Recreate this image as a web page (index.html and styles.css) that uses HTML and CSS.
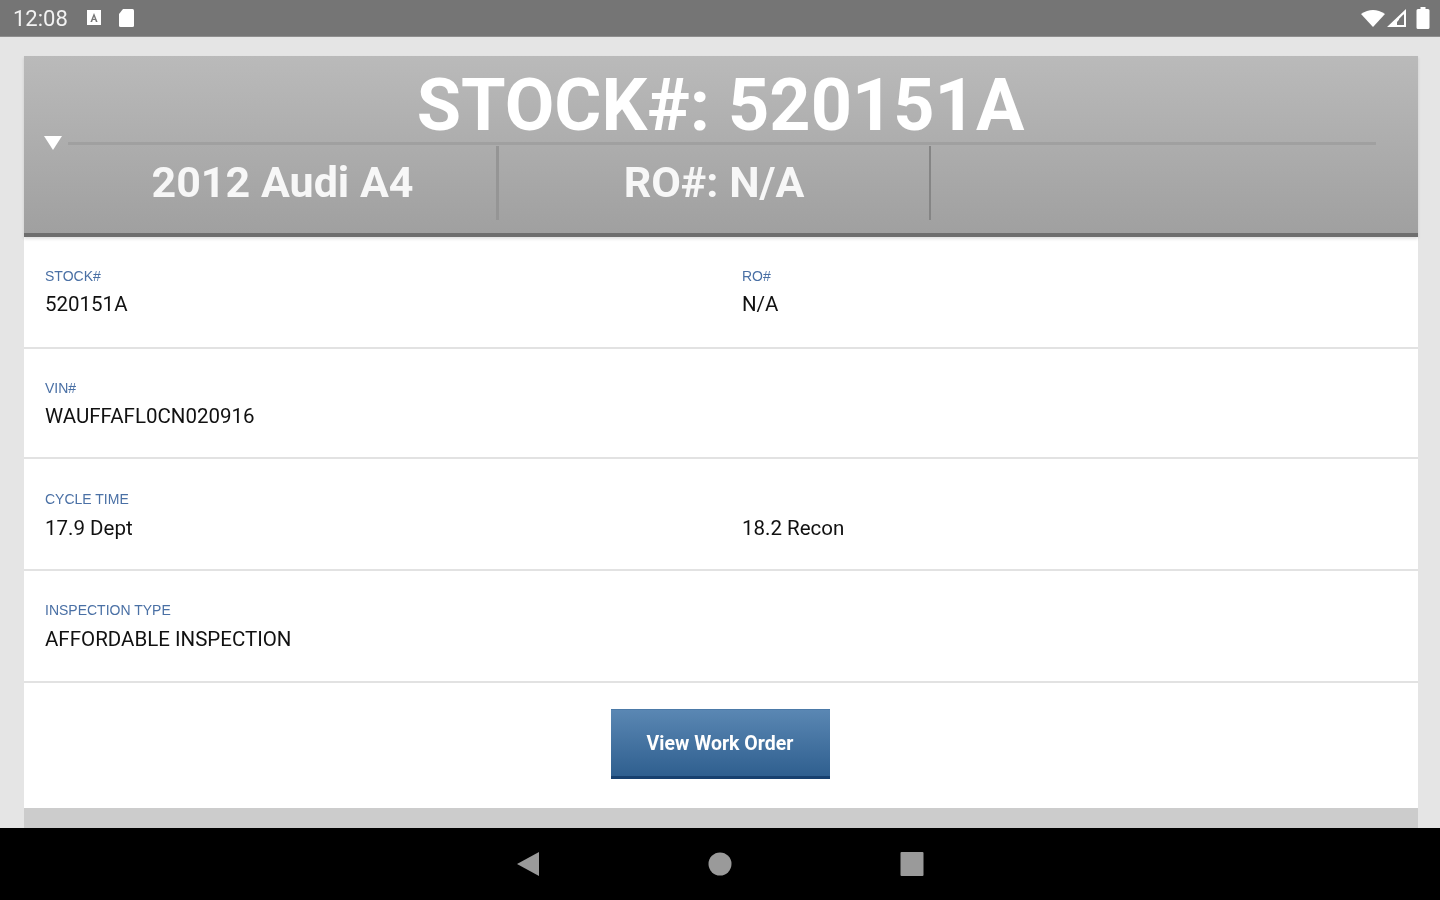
FILE: index.html
```html
<!DOCTYPE html>
<html lang="en">
<head>
  <meta charset="UTF-8">
  <meta name="viewport" content="width=device-width, initial-scale=1.0">
  <title>Vehicle Detail</title>
  <link rel="stylesheet" href="styles.css">
</head>
<body>
  <div class="status-bar">
    <span class="clock">12:08</span>
    <svg class="status-icon" width="18" height="18" viewBox="0 0 18 18">
      <path fill="#fff" fill-rule="evenodd" d="M2 1h14v15H2zM9 4l-3.6 9h1.7l.7-2h2.4l.7 2h1.7L9 4zm0 3.6L9.8 10H8.2z"/>
    </svg>
    <svg class="status-icon" width="20" height="20" viewBox="0 0 20 20">
      <path fill="#fff" d="M7 1h9.5A1.5 1.5 0 0 1 18 2.5v15a1.5 1.5 0 0 1-1.500 1.500h-12A1.500 1.500 0 0 1 3 17.500V6z"/>
    </svg>
    <div class="status-right">
      <svg width="24" height="18" viewBox="0 0 24 18"><path fill="#fff" d="M0 5Q12-3 24 5L12 18z"/></svg>
      <svg class="signal" width="20" height="18" viewBox="0 0 20 18">
        <path fill="#fff" fill-rule="evenodd" d="M19 0v18H0zM17 5l-7 8v3h7z" />
        <path fill="#777" d="M16 6v10h-4v-6z"/>
      </svg>
      <svg width="14" height="22" viewBox="0 0 14 22"><path fill="#fff" d="M4.500 0h5v2H12a1.500 1.500 0 0 1 1.500 1.500V20.500A1.500 1.500 0 0 1 12 22H2A1.500 1.500 0 0 1 .5 20.500V3.500A1.500 1.500 0 0 1 2 2h2.500z"/></svg>
    </div>
  </div>

  <div class="page">
    <div class="card">
      <div class="header">
        <h1 class="stock-title">STOCK#: 520151A</h1>
        <div class="rule-row">
          <span class="arrow"></span>
          <span class="rule"></span>
        </div>
        <div class="summary">
          <div class="summary-cell cell-car">2012 Audi A4</div>
          <div class="summary-cell cell-ro">RO#: N/A</div>
          <div class="summary-cell"></div>
        </div>
      </div>

      <div class="row row-a">
        <div class="col">
          <div class="label">STOCK#</div>
          <div class="value">520151A</div>
        </div>
        <div class="col">
          <div class="label">RO#</div>
          <div class="value">N/A</div>
        </div>
      </div>
      <div class="row row-b">
        <div class="col">
          <div class="label">VIN#</div>
          <div class="value">WAUFFAFL0CN020916</div>
        </div>
      </div>
      <div class="row row-c">
        <div class="col">
          <div class="label">CYCLE TIME</div>
          <div class="value">17.9 Dept</div>
        </div>
        <div class="col">
          <div class="label">&nbsp;</div>
          <div class="value">18.2 Recon</div>
        </div>
      </div>
      <div class="row row-d">
        <div class="col">
          <div class="label">INSPECTION TYPE</div>
          <div class="value">AFFORDABLE INSPECTION</div>
        </div>
      </div>

      <div class="actions">
        <a class="btn" href="javascript:;">View Work Order</a>
      </div>
    </div>
  </div>

  <div class="nav-bar">
    <svg width="24" height="26" viewBox="0 0 24 26"><path fill="#9a9a9a" d="M23 1v24L1 13z"/></svg>
    <svg width="24" height="24" viewBox="0 0 24 24"><circle cx="12" cy="12" r="11.500" fill="#9a9a9a"/></svg>
    <svg width="24" height="26" viewBox="0 0 24 26"><rect x="0.500" y="1" width="23" height="24" rx="1" fill="#9a9a9a"/></svg>
  </div>
</body>
</html>
```

FILE: styles.css
```css
*{
  margin: 0;
  padding: 0;
  box-sizing: border-box;
}
html,body{
  width: 1440px;
  height: 900px;
  overflow: hidden;
}
body{
  background: #e5e5e5;
  font-family: Roboto, "Liberation Sans", sans-serif;
  display: flex;
  flex-direction: column;
}
/* the source picture is a soft upscale */
.clock,.status-icon,.status-right,.card,.nav-bar svg{
  filter: blur(0.6px);
}
.status-bar{
  height: 37px;
  background: #757575;
  border-bottom: 1px solid #8e8e8e;
  display: flex;
  align-items: center;
  padding: 0 10px 0 13px;
  color: #f2f2f2;
}
.clock{
  font-size: 22px;
  width: 72px;
}
.status-icon{
  margin-right: 13px;
}
.status-right{
  margin-left: auto;
  display: flex;
  align-items: center;
  gap: 2px;
}
.signal{
  margin-right: 7px;
}
.page{
  height: 791px;
  padding: 19px 22px 0 24px;
  flex: none;
}
.card{
  height: 772px;
  background: #ccc;
  display: flex;
  flex-direction: column;
}
.header{
  height: 181px;
  flex: none;
  background: linear-gradient(#bababa, #a0a0a0);
  border-bottom: 4px solid #6e6e6e;
  box-shadow: 0 2px 3px rgba(0,0,0,.12);
  position: relative;
  color: #fff;
}
.stock-title{
  font-size: 72px;
  font-weight: bold;
  line-height: 82px;
  padding-top: 9px;
  text-align: center;
  margin-left: -1px;
  height: 84px;
  white-space: nowrap;
}
.rule-row{
  display: flex;
  align-items: center;
  height: 6px;
  padding-left: 20px;
  padding-right: 42px;
}
.arrow{
  width: 0;
  height: 0;
  border-left: 9px solid transparent;
  border-right: 9px solid transparent;
  border-top: 14px solid #fff;
}
.rule{
  flex: 1;
  height: 3px;
  margin-left: 6px;
  background: #a0a0a0;
}
.summary{
  display: flex;
  height: 74px;
}
.summary-cell{
  font-size: 43px;
  font-weight: bold;
  line-height: 72px;
  text-align: center;
  color: #f7f7f7;
}
.cell-car{
  width: 475px;
  padding-left: 45px;
  white-space: nowrap;
  border-right: 3px solid #959595;
}
.cell-ro{
  width: 432px;
  border-right: 2px solid #858585;
}
.row{
  background: #fff;
  border-bottom: 2px solid #e2e2e2;
  display: flex;
  padding: 30px 21px 0;
  flex: none;
}
.row-a{
  height: 112px;
}
.row-b{
  height: 110px;
}
.row-c{
  height: 112px;
  padding-top: 31px;
}
.row-c .value{
  margin-top: 8px;
}
.row-d{
  height: 112px;
}
.row-d .value{
  margin-top: 8px;
}
.col{
  width: 697px;
  flex: none;
}
.label{
  font-family: "Liberation Sans", sans-serif;
  font-size: 14px;
  line-height: 18px;
  color: #4a70a5;
}
.value{
  font-size: 20.5px;
  line-height: 24px;
  margin-top: 7px;
  color: #111;
}
.actions{
  height: 125px;
  flex: none;
  background: #fff;
  padding-top: 26px;
  display: flex;
  justify-content: center;
}
.btn{
  width: 219px;
  height: 70px;
  margin-left: -2px;
  background: linear-gradient(#5a87b3, #2f5f8f);
  border-bottom: 3px solid #17406f;
  border-top: 1px solid #4c7aa8;
  color: #fff;
  font-weight: bold;
  font-size: 19.5px;
  line-height: 67px;
  text-align: center;
  text-decoration: none;
}
.nav-bar{
  flex: 1;
  background: #000;
  display: flex;
  justify-content: center;
  align-items: center;
  gap: 168px;
}
```
